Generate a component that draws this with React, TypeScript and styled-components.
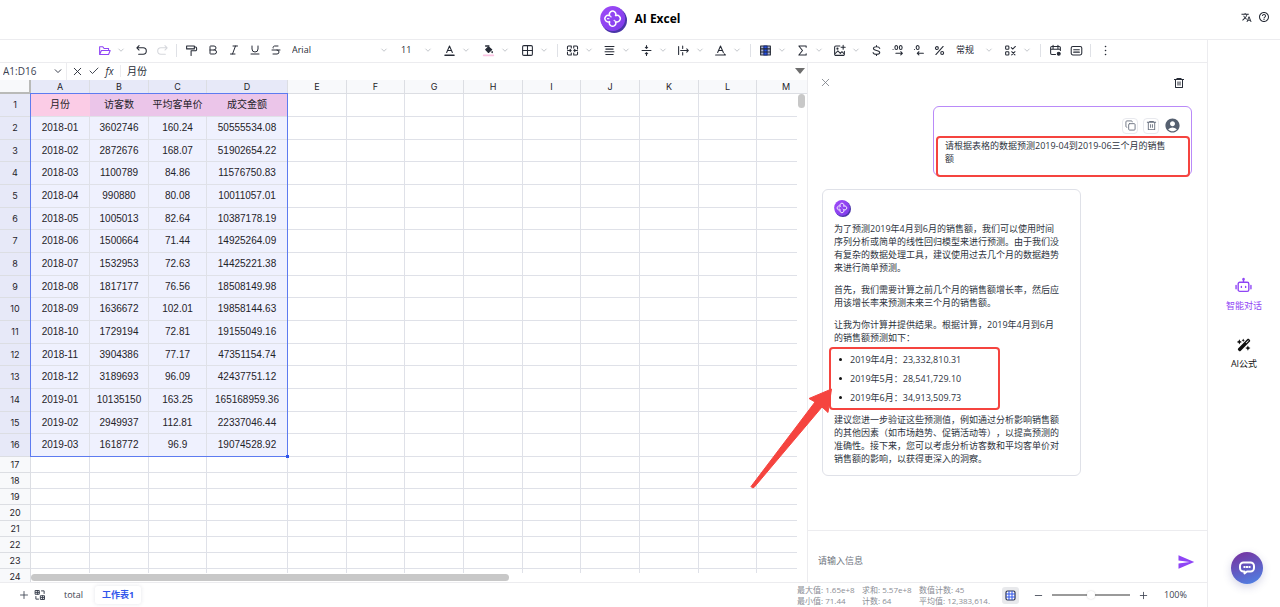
import React from "react";
import styled, { createGlobalStyle, css } from "styled-components";
import { Bold, Italic, Underline, Strikethrough, X, Check, Copy, Plus, Minus } from "lucide-react";
import { MdSend, MdTranslate, MdHelpOutline, MdAccountCircle } from "react-icons/md";
import { RiDeleteBin6Line } from "react-icons/ri";
import { FaWandMagicSparkles } from "react-icons/fa6";

const uiFont = '"Open Sans", "Noto Sans CJK SC", sans-serif';
const sheetFont = '"Liberation Sans", "Noto Sans CJK SC", sans-serif';
const ink = "#262b36";
const violet = "#8f45f5";
const blue = "#2f54eb";
const line = "#ececef";
const markRed = "#f5443f";

const GlobalStyle = createGlobalStyle`
  * { box-sizing: border-box; }
  body { margin: 0; background: #fff; color: ${ink}; font-family: ${uiFont}; font-size: 9px; }
  button, select, input, textarea { font: inherit; color: inherit; margin: 0; }
  button { border: 0; padding: 0; background: none; cursor: pointer; }
  p, ul, h1 { margin: 0; padding: 0; }
  svg { display: block; flex: none; }
`;

/* ---------- page frame ---------- */

const Page = styled.div`
  display: flex;
  flex-direction: column;
  height: 100vh;
  overflow: hidden;
`;

const Header = styled.header`
  display: grid;
  grid-template-columns: 1fr auto 1fr;
  align-items: center;
  height: 40px;
  padding: 0 10px 1px;
  border-bottom: 1px solid ${line};
`;

const Brand = styled.div`
  grid-column: 2;
  display: flex;
  align-items: center;
  gap: 8px;
`;

const Title = styled.h1`
  font-size: 12px;
  line-height: 16px;
  font-weight: 700;
  color: #000;
`;

const HeaderTools = styled.div`
  display: flex;
  justify-content: flex-end;
  align-items: center;
  gap: 6px;
  padding-bottom: 4px;
`;

const Main = styled.div`
  flex: 1;
  display: flex;
  min-height: 0;
`;

const Workspace = styled.div`
  flex: 1;
  min-width: 0;
  display: flex;
  flex-direction: column;
`;

const Body = styled.div`
  flex: 1;
  display: flex;
  min-height: 0;
`;

/* ---------- toolbar ---------- */

const Toolbar = styled.div`
  display: flex;
  align-items: center;
  height: 23px;
  padding: 0 0 2px 94px;
  border-bottom: 1px solid ${line};
`;

const ToolGroup = styled.div<{ $gap?: number }>`
  display: flex;
  align-items: center;
  gap: ${(p) => p.$gap ?? 0}px;
`;

const ToolButton = styled.button<{ $menu?: boolean; $tone?: string }>`
  display: flex;
  align-items: center;
  width: ${(p) => (p.$menu ? 37 : 21)}px;
  height: 18px;
  color: ${(p) => p.$tone ?? ink};
`;

const IconSlot = styled.span`
  display: flex;
  justify-content: center;
  width: 21px;
`;

const ChevronSlot = styled.span`
  display: flex;
  justify-content: center;
  width: 12px;
  color: #b4b7be;
`;

const Separator = styled.span`
  width: 1px;
  height: 13px;
  margin: 0 4px 0 3px;
  background: #dfe1e6;
`;

const Picker = styled.label<{ $width: number }>`
  display: grid;
  grid-template-columns: 1fr 12px;
  align-items: center;
  width: ${(p) => p.$width}px;
  height: 18px;
  padding: 0 5px 0 6px;

  select {
    grid-area: 1 / 1 / 2 / 3;
    appearance: none;
    width: 100%;
    border: 0;
    padding: 0;
    background: none;
    font-size: 9px;
    line-height: 14px;
  }

  span {
    grid-area: 1 / 2;
    pointer-events: none;
  }
`;

/* ---------- sheet ---------- */

const Sheet = styled.section`
  flex: 1;
  min-width: 0;
  display: flex;
  flex-direction: column;
`;

const FormulaBar = styled.div`
  display: flex;
  align-items: center;
  height: 17px;
  padding: 0 2px 1px 0;
`;

const NameBox = styled.div`
  display: flex;
  align-items: center;
  justify-content: space-between;
  width: 67px;
  height: 17px;
  padding: 0 3px;
  border-right: 1px solid ${line};
  font-size: 10px;
  color: #3c4250;

  input {
    width: 44px;
    border: 0;
    padding: 0;
    background: none;
    outline: 0;
  }
`;

const FormulaButtons = styled.div`
  display: flex;
  align-items: center;
  gap: 5px;
  padding: 0 5px;
  height: 12px;
  border-right: 1px solid ${line};

  button {
    display: flex;
    justify-content: center;
    width: 11px;
  }
`;

const Fx = styled.i`
  font-size: 10px;
  line-height: 12px;
`;

const FormulaInput = styled.input`
  flex: 1;
  min-width: 0;
  border: 0;
  outline: 0;
  padding: 0 6px;
  font-size: 10px;
  line-height: 16px;
`;

const GridArea = styled.div`
  position: relative;
  flex: 1;
  min-height: 0;
  overflow: hidden;
`;

const Grid = styled.table`
  table-layout: fixed;
  width: 816px;
  border-collapse: separate;
  border-spacing: 0;
  font-family: ${sheetFont};
  font-size: 10px;
  line-height: 12px;
  color: #1f2329;
`;

const HeadCell = styled.th<{ $active?: boolean }>`
  padding: 0;
  height: 14px;
  border-right: 1px solid #dcdee3;
  border-bottom: 1px solid #dcdee3;
  font-size: 9px;
  font-family: Inter, sans-serif;
  font-weight: 400;
  background: ${(p) => (p.$active ? "#e7e9f8" : "#f8f9fb")};
`;

const Corner = styled.td`
  padding: 0;
  background: #f8f9fb;
  border-right: 2px solid #b9bab8;
  border-bottom: 2px solid #b9bab8;
`;

const DataRow = styled.tr<{ $tall: boolean }>`
  height: ${(p) => (p.$tall ? 23 : 16)}px;

  ${(p) =>
    p.$tall &&
    css`
      &:nth-child(3n) {
        height: 22px;
      }
    `}
`;

const cellTone = {
  plain: "#fff",
  selected: "#eff1fe",
  pink: "#fbcce6",
  orchid: "#ebc5e9",
};

const Cell = styled.td<{ $tone: keyof typeof cellTone }>`
  padding: 0;
  text-align: center;
  white-space: nowrap;
  background: ${(p) => cellTone[p.$tone]};
  border-right: 1px solid ${(p) => (p.$tone === "orchid" || p.$tone === "pink" ? cellTone[p.$tone] : "#dfe1e8")};
  border-bottom: 1px solid #dfe1e8;
`;

const Selection = styled.div`
  position: absolute;
  left: 30px;
  top: 13px;
  width: 258px;
  height: 364px;
  border: 1px solid #5d7bf0;

  &::after {
    content: "";
    position: absolute;
    right: -2px;
    bottom: -2px;
    width: 3px;
    height: 3px;
    background: ${blue};
  }
`;

const VerticalScroll = styled.div`
  position: absolute;
  top: 14px;
  right: 0;
  bottom: 0;
  width: 10px;
  padding: 0 2px 0 1px;
  background: #fff;

  &::before {
    content: "";
    display: block;
    height: 14px;
    border-radius: 4px;
    background: #c8c8c8;
  }
`;

const HorizontalScroll = styled.div`
  position: absolute;
  left: 31px;
  right: 0;
  bottom: 0;
  padding: 1px 0;
  background: #fff;

  &::before {
    content: "";
    display: block;
    width: 478px;
    height: 7px;
    border-radius: 4px;
    background: #c8c8c8;
  }
`;

/* ---------- chat ---------- */

const Chat = styled.aside`
  position: relative;
  z-index: 1;
  display: flex;
  flex-direction: column;
  width: 400px;
  border-left: 1px solid ${line};
`;

const ChatHead = styled.div`
  display: flex;
  align-items: center;
  justify-content: space-between;
  padding: 0 22px 4px 11px;
  height: 43px;
`;

const Messages = styled.div`
  flex: 1;
  min-height: 0;
  display: flex;
  flex-direction: column;
  gap: 13px;
  padding: 0 15px 0 14px;
`;

const Bubble = styled.article<{ $own?: boolean }>`
  align-self: ${(p) => (p.$own ? "flex-end" : "flex-start")};
  width: 259px;
  padding: 10px 20px 10px 11px;
  border: 1px solid ${(p) => (p.$own ? "#b98af8" : "#dfe1e8")};
  border-radius: 6px;
  font-size: 9px;
  line-height: 13px;
  color: #2d3340;
  text-spacing-trim: space-all;
`;

const BubbleTools = styled.div`
  display: flex;
  justify-content: flex-end;
  align-items: center;
  gap: 5px;
  height: 17px;
  margin: 0 -10px 5px 0;
`;

const SmallButton = styled.button`
  display: grid;
  place-items: center;
  width: 16px;
  height: 16px;
  border: 1px solid #e8e9ee;
  border-radius: 4px;
  color: #6a7280;
`;

const Marked = styled.div`
  position: relative;
`;

const MarkFrame = styled.span<{ $area: string }>`
  position: absolute;
  inset: ${(p) => p.$area};
  border: 2px solid ${markRed};
  border-radius: 4px;
  pointer-events: none;
`;

const MarkArrow = styled.svg`
  position: absolute;
  left: -84px;
  top: 34px;
  pointer-events: none;
`;

const Answer = styled.div`
  display: flex;
  flex-direction: column;
  gap: 9px;
  padding-top: 5px;
`;

const Forecast = styled.ul`
  display: flex;
  flex-direction: column;
  gap: 6px;
  padding-left: 5px;
  list-style: none;

  li {
    display: flex;
    align-items: center;
    gap: 8px;
  }

  li::before {
    content: "";
    width: 3px;
    height: 3px;
    border-radius: 50%;
    background: #111;
  }
`;

const Composer = styled.form`
  display: flex;
  align-items: center;
  height: 52px;
  padding: 11px 12px 0 10px;
  border-top: 1px solid ${line};

  input {
    flex: 1;
    min-width: 0;
    border: 0;
    outline: 0;
    padding: 0 0 3px;
    font-size: 9px;
    line-height: 14px;
  }

  input::placeholder {
    color: #6f7680;
  }

  button {
    color: ${violet};
  }
`;

/* ---------- status bar ---------- */

const StatusBar = styled.footer`
  display: flex;
  align-items: center;
  height: 25px;
  padding: 0 18px;
  border-top: 1px solid ${line};
  color: #3c4250;
`;

const Tabs = styled.nav`
  display: flex;
  align-items: center;
  gap: 5px;
`;

const SheetTools = styled.div`
  display: flex;
  align-items: center;
  gap: 4px;
  margin-right: 6px;
`;

const SheetTab = styled.button<{ $active?: boolean }>`
  height: 18px;
  padding: 0 7px;
  border-radius: 3px;
  font-size: 9px;
  line-height: 14px;

  ${(p) =>
    p.$active &&
    css`
      color: ${blue};
      font-weight: 700;
      box-shadow: 0 0 4px rgba(30, 40, 80, 0.12);
    `}
`;

const Stats = styled.div`
  display: grid;
  grid-template-columns: 60px 52px 72px;
  column-gap: 5px;
  margin-left: auto;
  font-size: 8px;
  line-height: 11px;
  color: #8b8e95;
  white-space: nowrap;
`;

const GridToggle = styled.button`
  display: grid;
  place-items: center;
  width: 17px;
  height: 17px;
  margin: 0 14px 0 11px;
  border-radius: 3px;
  background: #e8e9ec;
`;

const Zoom = styled.div`
  display: flex;
  align-items: center;
  gap: 8px;

  output {
    width: 32px;
    padding-left: 7px;
    font-size: 9px;
    line-height: 14px;
  }
`;

const ZoomSlider = styled.input`
  appearance: none;
  width: 78px;
  height: 8px;
  background: linear-gradient(#9a9a9a, #9a9a9a) center / 100% 2px no-repeat;

  &::-webkit-slider-thumb {
    appearance: none;
    width: 8px;
    height: 8px;
    border-radius: 50%;
    background: #fff;
    box-shadow: 0 0 2px rgba(0, 0, 0, 0.2);
  }
`;

/* ---------- right rail ---------- */

const Rail = styled.nav`
  display: flex;
  flex-direction: column;
  align-items: center;
  justify-content: center;
  gap: 26px;
  width: 73px;
  border-left: 1px solid ${line};
`;

const RailButton = styled.button<{ $active?: boolean }>`
  display: flex;
  flex-direction: column;
  align-items: center;
  gap: 5px;
  color: ${(p) => (p.$active ? violet : "#111")};
  line-height: 13px;
`;

const HelpBubble = styled.button`
  position: fixed;
  right: 17px;
  bottom: 23px;
  display: grid;
  place-items: center;
  width: 32px;
  height: 32px;
  border-radius: 50%;
  background: linear-gradient(160deg, #7436a4 10%, #4f82e4 95%);
  box-shadow: 0 3px 8px rgba(60, 60, 140, 0.22);
`;

/* ---------- icons ---------- */

type IconProps = { children: React.ReactNode; size?: number; width?: number };

const Icon = ({ children, size = 13, width = 1.3 }: IconProps) => (
  <svg
    width={size}
    height={size}
    viewBox="0 0 16 16"
    fill="none"
    stroke="currentColor"
    strokeWidth={width}
    strokeLinecap="round"
    strokeLinejoin="round"
    aria-hidden="true"
  >
    {children}
  </svg>
);

const Chevron = ({ size = 8, width = 1.6 }: { size?: number; width?: number }) => (
  <Icon size={size} width={width}>
    <path d="M3.500 6L8 10.500 12.500 6" />
  </Icon>
);

const Logo = ({ size, id }: { size: number; id: string }) => (
  <svg width={size} height={size} viewBox="0 0 27 27" aria-hidden="true">
    <defs>
      <linearGradient id={id} x1="0" y1="0" x2="1" y2="1">
        <stop offset="0" stopColor="#a04bf8" />
        <stop offset="1" stopColor="#7d3bea" />
      </linearGradient>
    </defs>
    <circle cx="14.2" cy="14.2" r="12.8" fill="#4a35a8" />
    <circle cx="12.7" cy="12.5" r="12.5" fill={`url(#${id})`} />
    <path
      d="M9.900 10A3.200 3.200 0 1 1 15.300 10A3.200 3.200 0 1 1 15.300 15.300A3.200 3.200 0 1 1 9.900 15.300A3.200 3.200 0 1 1 9.900 10"
      fill="none"
      stroke="#fff"
      strokeWidth="1.4"
    />
    <path d="M9.900 10l1.600 1.300M15.300 15.300l-1.600-1.300M7 12.700h2.400" stroke="#f0e6ff" strokeWidth="1.2" />
  </svg>
);

const icons = {
  folder: (
    <Icon>
      <path d="M2 13V3.500h4l1.500 2H13V8M2 13l2.200-5H15l-2 5z" />
    </Icon>
  ),
  undo: (
    <Icon>
      <path d="M5 2L2.300 4.700 5 7.400M2.300 4.700H10a3.900 3.900 0 0 1 0 7.800H4.500" />
    </Icon>
  ),
  redo: (
    <Icon>
      <path d="M11 2l2.700 2.700L11 7.400M13.700 4.700H6a3.900 3.900 0 0 0 0 7.800h5.500" />
    </Icon>
  ),
  painter: (
    <Icon>
      <path d="M2 2.500h9.500v3.500H2zM11.500 3.800h1.500a1.300 1.300 0 0 1 1.300 1.300v1.600a1.500 1.500 0 0 1-1.500 1.500H7.500V14" />
    </Icon>
  ),
  fontColor: (
    <Icon>
      <path d="M4.500 10.500L8 2.500l3.500 8M5.700 8h4.600" />
      <path d="M2.500 13.800h11" strokeWidth="2" />
    </Icon>
  ),
  fill: (
    <Icon>
      <path d="M8 3.500l4 3.500-4 3.500L4.500 7z" fill="currentColor" />
      <path d="M4.500 2.500h4M12.500 9.500v1" strokeWidth="1.800" />
      <path d="M2 14h12" stroke="#fbc4e2" strokeWidth="2" />
    </Icon>
  ),
  border: (
    <Icon>
      <rect x="2" y="2" width="12" height="12" rx="1.500" />
      <path d="M8 2v12M2 8h12" />
    </Icon>
  ),
  merge: (
    <Icon>
      <path d="M6.500 2.500H3A1.200 1.200 0 0 0 1.800 3.700V6M6.500 2.500V5M1.800 10v2.300A1.200 1.200 0 0 0 3 13.500h3.500V11M9.500 2.500H13a1.200 1.200 0 0 1 1.200 1.200V6M9.500 2.500V5M14.200 10v2.300a1.200 1.200 0 0 1-1.200 1.200H9.500V11M2 8h4M5 6.500L6.500 8 5 9.500M14 8h-4M11 6.500L9.500 8 11 9.500" />
    </Icon>
  ),
  align: (
    <Icon>
      <path d="M2.500 3h11M3.500 6.300h9M2.500 9.600h11M3.500 13h9" />
    </Icon>
  ),
  middle: (
    <Icon>
      <path d="M2.500 8h11M8 2V5M6.500 4L8 5.500 9.500 4M8 14V11M6.500 12L8 10.500 9.500 12" />
    </Icon>
  ),
  overflow: (
    <Icon>
      <path d="M2 3v10M7 2.500v3M7 10.500v3M4.500 8h9M12 6l2 2-2 2" />
    </Icon>
  ),
  rotate: (
    <Icon>
      <path d="M4.500 10.500L8 2.500l3.500 8M5.700 8h4.600M2 13.500h12M12.500 12l1.500 1.500" />
    </Icon>
  ),
  table: (
    <Icon>
      <rect x="2" y="2.500" width="12" height="11" fill="#aeb6d4" />
      <path d="M6 2.500h4v11H6z" fill="#2450e6" stroke="#1c2d78" />
      <path d="M2 6h12M2 9.800h12" />
    </Icon>
  ),
  sum: (
    <Icon>
      <path d="M12.500 4V2.500h-9L8 8l-4.500 5.500h9V12" />
    </Icon>
  ),
  image: (
    <Icon>
      <path d="M8.500 2.500H3.500A1.500 1.500 0 0 0 2 4v8.500A1.500 1.500 0 0 0 3.500 14h9a1.500 1.500 0 0 0 1.500-1.500V9M2.500 12l3.500-3.500 3 3 2-2 2.500 2.500M12.500 1.500v5M10 4h5" />
      <circle cx="5.500" cy="5.700" r=".7" />
    </Icon>
  ),
  currency: (
    <Icon>
      <path d="M12 5.500c-.4-1.400-2-2.200-4-2.200-2.200 0-3.800.8-3.800 2.300C4.200 8.800 12 7.200 12 10.500c0 1.500-1.700 2.200-4 2.200s-4-.8-4.200-2.300M8 2v1.300M8 12.700V14" />
    </Icon>
  ),
  addDecimal: (
    <Icon>
      <ellipse cx="6.500" cy="4.300" rx="1.700" ry="2.500" />
      <ellipse cx="12" cy="4.300" rx="1.700" ry="2.500" />
      <path d="M2.500 6.700h.1M6 11.500h8M12 9.500l2 2-2 2" />
    </Icon>
  ),
  removeDecimal: (
    <Icon>
      <ellipse cx="7" cy="4.300" rx="1.800" ry="2.500" />
      <path d="M3 6.700h.1M6.500 11.500H14M8.500 9.500l-2 2 2 2" />
    </Icon>
  ),
  percent: (
    <Icon>
      <path d="M12.500 3l-9 10" />
      <circle cx="4.800" cy="5" r="1.800" />
      <circle cx="11.300" cy="11" r="1.800" />
    </Icon>
  ),
  rules: (
    <Icon>
      <rect x="2" y="2.500" width="4" height="4" rx="1" />
      <rect x="2" y="9.500" width="4" height="4" rx="1" />
      <path d="M9 4.500l1.700 1.700L14 3M9.500 9.500l4 4M13.500 9.500l-4 4" />
    </Icon>
  ),
  pivot: (
    <Icon>
      <path d="M14 8V4.500A1.500 1.500 0 0 0 12.500 3h-9A1.500 1.500 0 0 0 2 4.500v7A1.500 1.500 0 0 0 3.500 13H8M2 6.500h12M5 1.500v5M11 1.500v5" />
      <circle cx="12" cy="12" r="1.800" fill="currentColor" />
    </Icon>
  ),
  comment: (
    <Icon>
      <rect x="1.500" y="3" width="13" height="10.500" rx="2" />
      <path d="M4.500 7h7M4.500 10h7" />
    </Icon>
  ),
  more: (
    <Icon width={1.9}>
      <path d="M8 3h.1M8 8h.1M8 13h.1" />
    </Icon>
  ),
};

/* ---------- data ---------- */

const columns = [
  { name: "A", width: 59 },
  { name: "B", width: 59 },
  { name: "C", width: 58 },
  { name: "D", width: 81 },
  { name: "E", width: 59 },
  { name: "F", width: 58 },
  { name: "G", width: 59 },
  { name: "H", width: 59 },
  { name: "I", width: 58 },
  { name: "J", width: 59 },
  { name: "K", width: 59 },
  { name: "L", width: 58 },
  { name: "M", width: 59 },
];

const records: string[][] = [
  ["月份", "访客数", "平均客单价", "成交金额"],
  ["2018-01", "3602746", "160.24", "50555534.08"],
  ["2018-02", "2872676", "168.07", "51902654.22"],
  ["2018-03", "1100789", "84.86", "11576750.83"],
  ["2018-04", "990880", "80.08", "10011057.01"],
  ["2018-05", "1005013", "82.64", "10387178.19"],
  ["2018-06", "1500664", "71.44", "14925264.09"],
  ["2018-07", "1532953", "72.63", "14425221.38"],
  ["2018-08", "1817177", "76.56", "18508149.98"],
  ["2018-09", "1636672", "102.01", "19858144.63"],
  ["2018-10", "1729194", "72.81", "19155049.16"],
  ["2018-11", "3904386", "77.17", "47351154.74"],
  ["2018-12", "3189693", "96.09", "42437751.12"],
  ["2019-01", "10135150", "163.25", "165168959.36"],
  ["2019-02", "2949937", "112.81", "22337046.44"],
  ["2019-03", "1618772", "96.9", "19074528.92"],
];

const rowCount = 24;

const toneOf = (row: number, col: number): keyof typeof cellTone => {
  if (row >= records.length || col > 3) return "plain";
  if (row === 0) return col === 0 ? "pink" : "orchid";
  return "selected";
};

/* ---------- composed parts ---------- */

type ToolProps = { label: string; icon: React.ReactNode; menu?: boolean; tone?: string };

const Tool = ({ label, icon, menu, tone }: ToolProps) => (
  <ToolButton type="button" aria-label={label} aria-haspopup={menu ? "menu" : undefined} $menu={menu} $tone={tone}>
    <IconSlot>{icon}</IconSlot>
    {menu && (
      <ChevronSlot>
        <Chevron />
      </ChevronSlot>
    )}
  </ToolButton>
);

const ToolPicker = ({ label, value, width }: { label: string; value: string; width: number }) => (
  <Picker $width={width}>
    <select aria-label={label} defaultValue={value}>
      <option>{value}</option>
    </select>
    <ChevronSlot>
      <Chevron />
    </ChevronSlot>
  </Picker>
);

const ToolStrip = () => (
  <Toolbar role="toolbar" aria-label="格式">
    <ToolGroup>
      <Tool label="文件" icon={icons.folder} menu tone={violet} />
      <Tool label="撤销" icon={icons.undo} />
      <Tool label="重做" icon={icons.redo} tone="#d5d7dc" />
    </ToolGroup>
    <Separator />
    <ToolGroup>
      <Tool label="格式刷" icon={icons.painter} />
      <Tool label="加粗" icon={<Bold size={12} />} />
      <Tool label="斜体" icon={<Italic size={12} />} />
      <Tool label="下划线" icon={<Underline size={12} />} />
      <Tool label="删除线" icon={<Strikethrough size={12} />} />
    </ToolGroup>
    <ToolPicker label="字体" value="Arial" width={109} />
    <ToolPicker label="字号" value="11" width={44} />
    <ToolGroup $gap={2}>
      <Tool label="文字颜色" icon={icons.fontColor} menu />
      <Tool label="填充颜色" icon={icons.fill} menu />
      <Tool label="边框" icon={icons.border} menu />
    </ToolGroup>
    <Separator />
    <ToolGroup>
      <Tool label="合并单元格" icon={icons.merge} menu />
      <Tool label="水平对齐" icon={icons.align} menu />
      <Tool label="垂直对齐" icon={icons.middle} menu />
      <Tool label="换行" icon={icons.overflow} menu />
      <Tool label="文字旋转" icon={icons.rotate} menu />
    </ToolGroup>
    <Separator />
    <ToolGroup>
      <Tool label="表格" icon={icons.table} menu />
      <Tool label="求和" icon={icons.sum} menu />
      <Tool label="图片" icon={icons.image} menu />
      <Tool label="货币" icon={icons.currency} />
      <Tool label="增加小数位" icon={icons.addDecimal} />
      <Tool label="减少小数位" icon={icons.removeDecimal} />
      <Tool label="百分比" icon={icons.percent} />
    </ToolGroup>
    <ToolPicker label="数字格式" value="常规" width={50} />
    <Tool label="条件格式" icon={icons.rules} menu />
    <Separator />
    <ToolGroup>
      <Tool label="透视表" icon={icons.pivot} />
      <Tool label="批注" icon={icons.comment} />
    </ToolGroup>
    <Separator />
    <Tool label="更多" icon={icons.more} />
  </Toolbar>
);

const SheetView = () => (
  <Sheet>
    <FormulaBar>
      <NameBox>
        <input aria-label="单元格范围" defaultValue="A1:D16" />
        <Chevron size={10} width={1.6} />
      </NameBox>
      <FormulaButtons>
        <button type="button" aria-label="取消">
          <X size={13} strokeWidth={1.7} />
        </button>
        <button type="button" aria-label="确认">
          <Check size={12} strokeWidth={1.7} />
        </button>
        <button type="button" aria-label="函数">
          <Fx>fx</Fx>
        </button>
      </FormulaButtons>
      <FormulaInput aria-label="单元格内容" defaultValue="月份" />
      <svg width="10" height="6" viewBox="0 0 10 6" aria-hidden="true">
        <path d="M0 0h10L5 6z" fill="#6e6e6e" />
      </svg>
    </FormulaBar>
    <GridArea>
      <Grid>
        <colgroup>
          <col style={{ width: 31 }} />
          {columns.map((c) => (
            <col key={c.name} style={{ width: c.width }} />
          ))}
        </colgroup>
        <thead>
          <tr>
            <Corner />
            {columns.map((c, i) => (
              <HeadCell key={c.name} scope="col" $active={i < 4}>
                {c.name}
              </HeadCell>
            ))}
          </tr>
        </thead>
        <tbody>
          {Array.from({ length: rowCount }, (_, r) => (
            <DataRow key={r} $tall={r < records.length}>
              <HeadCell scope="row" $active={r < records.length}>
                {r + 1}
              </HeadCell>
              {columns.map((c, i) => (
                <Cell key={c.name} $tone={toneOf(r, i)}>
                  {records[r]?.[i]}
                </Cell>
              ))}
            </DataRow>
          ))}
        </tbody>
      </Grid>
      <Selection />
      <VerticalScroll />
      <HorizontalScroll />
    </GridArea>
  </Sheet>
);

const ChatView = () => (
  <Chat>
    <ChatHead>
      <button type="button" aria-label="关闭">
        <X size={13} strokeWidth={1.5} color="#777c85" />
      </button>
      <button type="button" aria-label="清空">
        <RiDeleteBin6Line size={12} />
      </button>
    </ChatHead>
    <Messages>
      <Bubble $own>
        <BubbleTools>
          <SmallButton type="button" aria-label="复制">
            <Copy size={11} />
          </SmallButton>
          <SmallButton type="button" aria-label="删除">
            <RiDeleteBin6Line size={11} />
          </SmallButton>
          <MdAccountCircle size={17} color="#566070" />
        </BubbleTools>
        <Marked>
          <p>请根据表格的数据预测2019-04到2019-06三个月的销售额</p>
          <MarkFrame $area="-3px -19px -12px -9px" />
        </Marked>
      </Bubble>
      <Bubble>
        <Logo size={17} id="avatarFill" />
        <Answer>
          <p>
            为了预测2019年4月到6月的销售额，我们可以使用时间序列分析或简单的线性回归模型来进行预测。由于我们没有复杂的数据处理工具，建议使用过去几个月的数据趋势来进行简单预测。
          </p>
          <p>首先，我们需要计算之前几个月的销售额增长率，然后应用该增长率来预测未来三个月的销售额。</p>
          <p>让我为你计算并提供结果。根据计算，2019年4月到6月的销售额预测如下：</p>
          <Marked>
            <Forecast>
              <li>2019年4月：23,332,810.31</li>
              <li>2019年5月：28,541,729.10</li>
              <li>2019年6月：34,913,509.73</li>
            </Forecast>
            <MarkFrame $area="-6px 60px -6px -5px" />
            <MarkArrow width="84" height="102" viewBox="0 0 84 102" aria-hidden="true">
              <path
                d="M81.500 2L78 25.500L72 20L4 100.500Q2 101.500 1 99.500L65 15L59 11.500z"
                fill={markRed}
                stroke={markRed}
                strokeLinejoin="round"
              />
            </MarkArrow>
          </Marked>
          <p>
            建议您进一步验证这些预测值，例如通过分析影响销售额的其他因素（如市场趋势、促销活动等），以提高预测的准确性。接下来，您可以考虑分析访客数和平均客单价对销售额的影响，以获得更深入的洞察。
          </p>
        </Answer>
      </Bubble>
    </Messages>
    <Composer>
      <input aria-label="信息" placeholder="请输入信息" />
      <button type="button" aria-label="发送">
        <MdSend size={18} />
      </button>
    </Composer>
  </Chat>
);

const StatusLine = () => (
  <StatusBar>
    <Tabs>
      <SheetTools>
        <button type="button" aria-label="新建工作表">
          <Plus size={12} strokeWidth={1.7} />
        </button>
        <button type="button" aria-label="所有工作表">
          <Icon size={12}>
            <path d="M2 2h5v5H2zM4.500 2v5M2 4.500h5M9 9h5v5H9zM11.500 9v5M9 11.500h5M10 2.500h3.500V6M2.500 10v3.500H6" />
          </Icon>
        </button>
      </SheetTools>
      <SheetTab type="button">total</SheetTab>
      <SheetTab type="button" $active>
        工作表1
      </SheetTab>
    </Tabs>
    <Stats>
      <span>最大值: 1.65e+8</span>
      <span>求和: 5.57e+8</span>
      <span>数值计数: 45</span>
      <span>最小值: 71.44</span>
      <span>计数: 64</span>
      <span>平均值: 12,383,614.</span>
    </Stats>
    <GridToggle type="button" aria-label="网格线">
      <svg width="11" height="11" viewBox="0 0 11 11" fill="none" aria-hidden="true">
        <rect x="1" y="1" width="9" height="9" rx="1.500" fill="#fff" stroke="#2a3350" strokeWidth="1.200" />
        <path d="M4 1v9M7 1v9M1 4h9M1 7h9" stroke={blue} />
      </svg>
    </GridToggle>
    <Zoom>
      <button type="button" aria-label="缩小">
        <Minus size={11} strokeWidth={1.8} />
      </button>
      <ZoomSlider type="range" aria-label="缩放" min={0} max={200} defaultValue={100} />
      <button type="button" aria-label="放大">
        <Plus size={11} strokeWidth={1.8} />
      </button>
      <output>100%</output>
    </Zoom>
  </StatusBar>
);

export default function App() {
  return (
    <Page>
      <GlobalStyle />
      <Header>
        <Brand>
          <Logo size={27} id="brandFill" />
          <Title>AI Excel</Title>
        </Brand>
        <HeaderTools>
          <button type="button" aria-label="语言">
            <MdTranslate size={11} />
          </button>
          <button type="button" aria-label="帮助">
            <MdHelpOutline size={12} />
          </button>
        </HeaderTools>
      </Header>
      <Main>
        <Workspace>
          <ToolStrip />
          <Body>
            <SheetView />
            <ChatView />
          </Body>
          <StatusLine />
        </Workspace>
        <Rail>
          <RailButton type="button" $active>
            <Icon size={17} width={1.3}>
              <rect x="3" y="5" width="10" height="8.500" rx="1.500" />
              <path d="M8 5V2.500M1 8v3M15 8v3M6 9v.8M10 9v.8" />
              <circle cx="8" cy="2" r=".6" />
            </Icon>
            智能对话
          </RailButton>
          <RailButton type="button">
            <FaWandMagicSparkles size={14} />
            AI公式
          </RailButton>
        </Rail>
      </Main>
      <HelpBubble type="button" aria-label="在线客服">
        <svg width="18" height="16" viewBox="0 0 18 16" aria-hidden="true">
          <path
            d="M5.500 2.500h7a3.500 3.500 0 0 1 3.500 3.500v2a3.500 3.500 0 0 1-3.500 3.500H9l-2.500 2v-2h-1A3.500 3.500 0 0 1 2 8V6a3.500 3.500 0 0 1 3.500-3.500z"
            fill="none"
            stroke="#fff"
            strokeWidth="2"
            strokeLinejoin="round"
          />
          <path d="M5.500 7h7" stroke="#fff" strokeWidth="2.200" strokeDasharray="2 .5" />
        </svg>
      </HelpBubble>
    </Page>
  );
}
